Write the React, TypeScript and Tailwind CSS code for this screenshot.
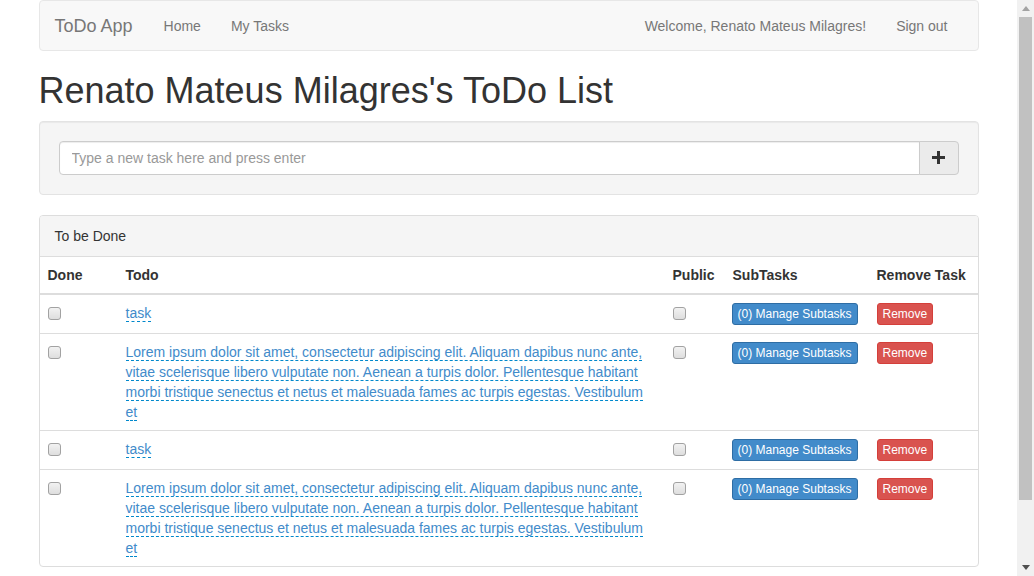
const longText =
  "Lorem ipsum dolor sit amet, consectetur adipiscing elit. Aliquam dapibus nunc ante, vitae scelerisque libero vulputate non. Aenean a turpis dolor. Pellentesque habitant morbi tristique senectus et netus et malesuada fames ac turpis egestas. Vestibulum et";

const tasks = ["task", longText, "task", longText];

function CheckBox() {
  return (
    <span className="mt-[4px] block h-[13px] w-[13px] rounded-[3px] border border-[#a2a2a2] bg-gradient-to-b from-[#f2f2f2] to-[#dedede]" />
  );
}

function Scrollbar() {
  return (
    <div className="flex h-full w-[17px] shrink-0 flex-col bg-[#f1f1f1]">
      <div className="flex h-[17px] items-center justify-center">
        <svg width="8" height="5" viewBox="0 0 8 5">
          <path d="M0 5 L4 0 L8 5 Z" fill="#a3a3a3" />
        </svg>
      </div>
      <div className="mx-[2px] h-[483px] bg-[#c1c1c1]" />
      <div className="flex-1" />
      <div className="flex h-[17px] items-center justify-center">
        <svg width="8" height="5" viewBox="0 0 8 5">
          <path d="M0 0 L8 0 L4 5 Z" fill="#505050" />
        </svg>
      </div>
    </div>
  );
}

export default function App() {
  return (
    <div className="flex h-[576px] overflow-hidden bg-white font-['Liberation_Sans',Arial,sans-serif] text-[14px] leading-[20px] text-[#333]">
      <div className="min-w-0 flex-1 overflow-hidden">
        <div className="mx-auto w-[970px] px-[15px]">
          {/* navbar */}
          <nav className="mb-[20px] flex h-[51px] items-center justify-between rounded-[4px] border border-[#e7e7e7] bg-[#f8f8f8] text-[#777]">
            <div className="flex items-center">
              <span className="pl-[15px] pr-[16px] text-[18px] leading-[20px]">ToDo App</span>
              <span className="px-[15px]">Home</span>
              <span className="px-[15px]">My Tasks</span>
            </div>
            <div className="mr-[15px] flex items-center">
              <span className="px-[15px]">Welcome, Renato Mateus Milagres!</span>
              <span className="px-[15px]">Sign out</span>
            </div>
          </nav>

          <h1 className="mb-[10px] text-[36px] leading-[39.6px] font-normal">
            Renato Mateus Milagres's ToDo List
          </h1>

          {/* new task */}
          <div className="mb-[20px] rounded-[4px] border border-[#e3e3e3] bg-[#f5f5f5] p-[19px] shadow-[inset_0_1px_1px_rgba(0,0,0,0.05)]">
            <div className="flex">
              <input
                className="h-[34px] flex-1 rounded-l-[4px] border border-[#ccc] bg-white px-[12px] text-[14px] text-[#555] shadow-[inset_0_1px_1px_rgba(0,0,0,0.075)] outline-none placeholder:text-[#999]"
                placeholder="Type a new task here and press enter"
              />
              <button className="-ml-px flex h-[34px] w-[40px] items-center justify-center rounded-r-[4px] border border-[#ccc] bg-[#ebebeb]">
                <svg width="13" height="13" viewBox="0 0 13 13">
                  <path d="M5 0 H8 V5 H13 V8 H8 V13 H5 V8 H0 V5 H5 Z" fill="#333" />
                </svg>
              </button>
            </div>
          </div>

          {/* task list */}
          <div className="mb-[20px] rounded-[4px] border border-[#ddd]">
            <div className="rounded-t-[3px] border-b border-[#ddd] bg-[#f5f5f5] px-[15px] py-[10px]">
              To be Done
            </div>
            <table className="w-full table-fixed border-collapse">
              <colgroup>
                <col className="w-[78px]" />
                <col className="w-[547px]" />
                <col className="w-[60px]" />
                <col className="w-[144px]" />
                <col />
              </colgroup>
              <thead>
                <tr>
                  <th className="border-b-2 border-[#ddd] p-[8px] text-left font-bold">Done</th>
                  <th className="border-b-2 border-[#ddd] p-[8px] text-left font-bold">Todo</th>
                  <th className="border-b-2 border-[#ddd] p-[8px] text-left font-bold">Public</th>
                  <th className="border-b-2 border-[#ddd] p-[8px] text-left font-bold">SubTasks</th>
                  <th className="border-b-2 border-[#ddd] p-[8px] text-left font-bold">Remove Task</th>
                </tr>
              </thead>
              <tbody>
                {tasks.map((t, i) => (
                  <tr key={i}>
                    <td className="border-t border-[#ddd] p-[8px] align-top">
                      <CheckBox />
                    </td>
                    <td className="border-t border-[#ddd] p-[8px] align-top">
                      <a className="cursor-pointer border-b border-dashed border-[#0088cc] text-[#428bca]">
                        {t}
                      </a>
                    </td>
                    <td className="border-t border-[#ddd] p-[8px] align-top">
                      <CheckBox />
                    </td>
                    <td className="border-t border-[#ddd] py-[8px] pl-[7px] pr-[8px] align-top">
                      <button className="block whitespace-nowrap rounded-[3px] border border-[#2e6da4] bg-[#428bca] px-[5px] py-[1px] text-[12px] leading-[18px] text-white">
                        (0) Manage Subtasks
                      </button>
                    </td>
                    <td className="border-t border-[#ddd] p-[8px] align-top">
                      <button className="block rounded-[3px] border border-[#d43f3a] bg-[#d9534f] px-[5px] py-[1px] text-[12px] leading-[18px] text-white">
                        Remove
                      </button>
                    </td>
                  </tr>
                ))}
              </tbody>
            </table>
          </div>
        </div>
      </div>
      <Scrollbar />
    </div>
  );
}
